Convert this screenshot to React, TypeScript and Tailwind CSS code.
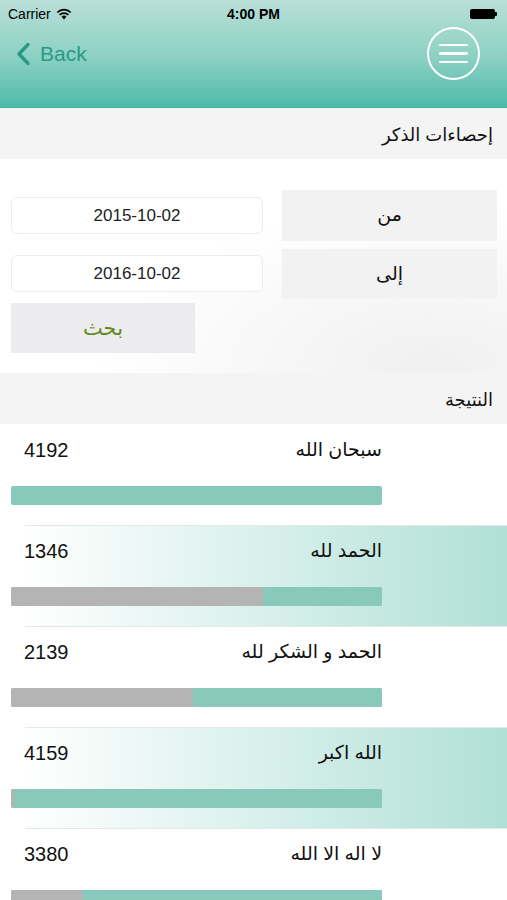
import React from "react";

const rows = [
  { label: "سبحان الله", value: 4192, tint: false },
  { label: "الحمد لله", value: 1346, tint: true },
  { label: "الحمد و الشكر لله", value: 2139, tint: false },
  { label: "الله اكبر", value: 4159, tint: true },
  { label: "لا اله الا الله", value: 3380, tint: false },
];

const max = 4192;

function StatusBar() {
  return (
    <div className="flex h-[28px] items-center justify-between px-[8px] text-[14px] text-black">
      <div className="flex w-[120px] items-center gap-[5px]">
        <span>Carrier</span>
        <svg width="16" height="12" viewBox="0 0 16 12">
          <path d="M8 11.5 L5.6 8.8 A3.4 3.4 0 0 1 10.4 8.8 Z" fill="#000" />
          <path d="M3.6 6.9 A6.2 6.2 0 0 1 12.4 6.9" stroke="#000" strokeWidth="1.7" fill="none" />
          <path d="M1.3 4.5 A9.4 9.4 0 0 1 14.7 4.5" stroke="#000" strokeWidth="1.7" fill="none" />
        </svg>
      </div>
      <span className="font-semibold">4:00 PM</span>
      <div className="flex w-[120px] justify-end pr-[2px]">
        <div className="flex items-center">
          <div className="h-[10px] w-[25px] rounded-[2px] bg-black" />
          <div className="h-[4px] w-[2px] rounded-r-[1px] bg-black" />
        </div>
      </div>
    </div>
  );
}

function Header() {
  return (
    <div className="h-[108px] border-b border-[#46b3a1] bg-gradient-to-b from-[#b8dfd8] via-[#8fd2c5] to-[#4cbcaa]">
      <StatusBar />
      <div className="flex items-center justify-between pl-[16px] pr-[27px]">
        <div className="flex items-center gap-[9px] text-[21px] text-[#2a9a86]">
          <svg width="15" height="24" viewBox="0 0 15 24">
            <path d="M12 2.5 L3 12 L12 21.5" stroke="#2a9a86" strokeWidth="3.4" fill="none" strokeLinecap="round" strokeLinejoin="round" />
          </svg>
          <span>Back</span>
        </div>
        <div className="mt-[-1px] flex h-[53px] w-[53px] flex-col items-center justify-center gap-[6px] rounded-full border-2 border-white">
          <div className="h-[2.5px] w-[29px] rounded bg-white" />
          <div className="h-[2.5px] w-[29px] rounded bg-white" />
          <div className="h-[2.5px] w-[29px] rounded bg-white" />
        </div>
      </div>
    </div>
  );
}

function SectionTitle({ text }: { text: string }) {
  return (
    <div dir="rtl" className="flex h-[51px] items-center bg-[#f4f4f4] pr-[14px] pt-[3px] text-[18px] text-[#111]">
      {text}
    </div>
  );
}

function Form() {
  return (
    <div className="flex h-[214px] justify-between bg-white bg-[radial-gradient(ellipse_at_85%_95%,#f0f0f0_0%,#ffffff_55%)] px-[10px]">
      <div className="flex w-[253px] flex-col pl-[1px] pt-[38px]">
        <div className="flex h-[37px] items-center justify-center rounded-[6px] border border-[#ececec] bg-white text-[17px] text-[#222]">
          2015-10-02
        </div>
        <div className="mt-[21px] flex h-[37px] items-center justify-center rounded-[6px] border border-[#ececec] bg-white text-[17px] text-[#222]">
          2016-10-02
        </div>
        <div dir="rtl" className="mt-[11px] flex h-[50px] w-[184px] items-center justify-center bg-[#ececee] text-[21px] text-[#5f8a22]">
          بحث
        </div>
      </div>
      <div className="flex w-[215px] flex-col gap-[8px] pt-[31px]">
        <div dir="rtl" className="flex h-[51px] items-center justify-center bg-[#f2f2f2] text-[19px] text-[#111]">
          من
        </div>
        <div dir="rtl" className="flex h-[50px] items-center justify-center bg-[#f2f2f2] text-[19px] text-[#111]">
          إلى
        </div>
      </div>
    </div>
  );
}

function Row({ label, value, tint, first }: { label: string; value: number; tint: boolean; first: boolean }) {
  const pct = (value / max) * 100;
  return (
    <div
      className={
        "flex h-[101px] flex-col pl-[11px] " +
        (tint ? "bg-gradient-to-r from-white from-[5%] to-[#b0e0d7]" : "bg-white")
      }
    >
      <div className={"ml-[14px] h-px " + (first ? "bg-transparent" : "bg-[#e3e9e7]")} />
      <div className="flex w-[371px] items-center justify-between pl-[13px] pt-[13px]">
        <span className="text-[20px] leading-[24px] text-[#111]">{value}</span>
        <span dir="rtl" className="text-[19px] leading-[24px] text-[#111]">{label}</span>
      </div>
      <div className="mt-[24px] flex h-[19px] w-[371px] overflow-hidden rounded-[2px] bg-[#b4b4b4]">
        <div className="h-full bg-[#b4b4b4]" style={{ width: `${100 - pct}%` }} />
        <div className="h-full bg-[#88c9bb]" style={{ width: `${pct}%` }} />
      </div>
    </div>
  );
}

export default function App() {
  return (
    <div
      className="h-[900px] w-[507px] overflow-hidden bg-white"
      style={{ fontFamily: '"Liberation Sans", "DejaVu Sans", sans-serif' }}
    >
      <Header />
      <SectionTitle text="إحصاءات الذكر" />
      <Form />
      <SectionTitle text="النتيجة" />
      {rows.map((r, i) => (
        <Row key={r.label} label={r.label} value={r.value} tint={r.tint} first={i === 0} />
      ))}
    </div>
  );
}
